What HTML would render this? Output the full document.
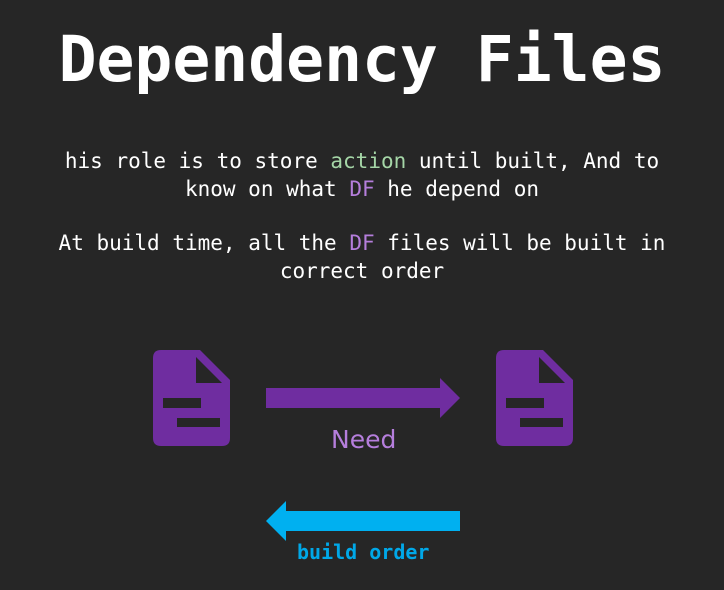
<!DOCTYPE html>
<html><head><style>
body{margin:0;width:724px;height:590px;background:#262626;overflow:hidden;position:relative;font-family:"DejaVu Sans Mono","Liberation Mono",monospace;color:#fff}
.t{position:absolute;left:0;width:724px;text-align:center;white-space:nowrap}
h1{position:absolute;left:0;top:15px;width:724px;margin:0;text-align:center;font-size:63px;font-weight:bold;line-height:90px}
.p{font-size:21px;line-height:28px}
.g{color:#a5d6a7}.v{color:#b57edc}
</style></head><body>
<h1>Dependency Files</h1>
<div class="t p" style="top:147px">his role is to store <span class="g">action</span> until built, And to<br>know on what <span class="v">DF</span> he depend on</div>
<div class="t p" style="top:229px">At build time, all the <span class="v">DF</span> files will be built in<br>correct order</div>
<svg width="724" height="590" style="position:absolute;left:0;top:0">
<g fill="#6f2da0">
<path d="M161 350H200L230 380V438Q230 446 222 446H161Q153 446 153 438V358Q153 350 161 350Z"/>
<path d="M504 350H543L573 380V438Q573 446 565 446H504Q496 446 496 438V358Q496 350 504 350Z"/>
<path d="M266 388H440V378L460 398L440 418V408H266Z"/>
</g>
<g fill="#262626">
<path d="M196 357V383H222Z"/><rect x="163" y="398" width="38" height="10"/><rect x="177" y="418" width="43" height="9"/>
<path d="M539 357V383H565Z"/><rect x="506" y="398" width="38" height="10"/><rect x="520" y="418" width="43" height="9"/>
</g>
<path fill="#00b0f0" d="M460 511H286V501L266 521L286 541V531H460Z"/>
</svg>
<div class="t" style="top:425px;left:331px;width:70px;text-align:left;font-family:'DejaVu Sans',sans-serif;font-size:25px;color:#b57edc">Need</div>
<div class="t" style="top:540px;left:297px;width:140px;text-align:left;font-size:20px;font-weight:bold;color:#00a8e8">build order</div>
</body></html>
